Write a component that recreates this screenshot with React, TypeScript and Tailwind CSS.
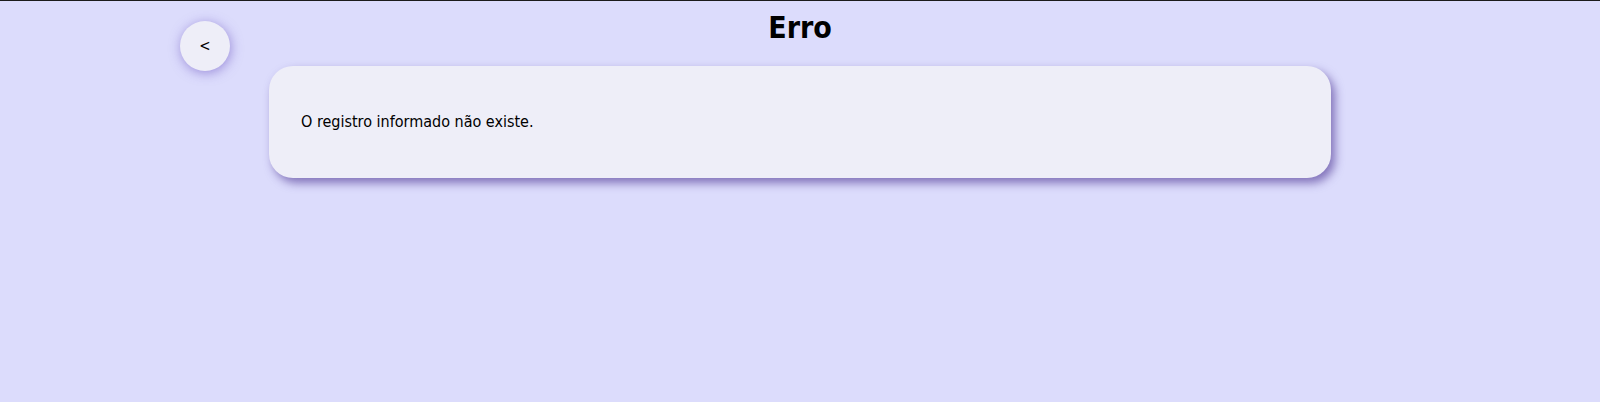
import React from "react";

export default function App() {
  return (
    <div
      className="min-h-[402px] bg-[#dcdcfc] border-t border-[#1b1b1b] text-black"
      style={{ fontFamily: '"DejaVu Sans Condensed", "DejaVu Sans", sans-serif' }}
    >
      <div className="mx-auto w-[1240px]">
        <div className="grid grid-cols-[1fr_auto_1fr] items-start pt-[10px]">
          <div className="justify-self-start">
            <button className="mt-[10px] flex h-[50px] w-[50px] items-center justify-center rounded-full bg-[#eeeef8] text-[15px] shadow-[1px_2px_12px_rgba(100,75,190,0.55)]">
              &lt;
            </button>
          </div>
          <h1 className="text-[30px] font-bold leading-[34px]">Erro</h1>
          <div />
        </div>
        <div className="mx-auto -mt-[5px] w-[1062px] rounded-[24px] bg-[#eeeef8] px-8 py-[46px] shadow-[4px_5px_10px_rgba(75,50,145,0.62)]">
          <p className="text-[16px] leading-[20px]">O registro informado não existe.</p>
        </div>
      </div>
    </div>
  );
}
